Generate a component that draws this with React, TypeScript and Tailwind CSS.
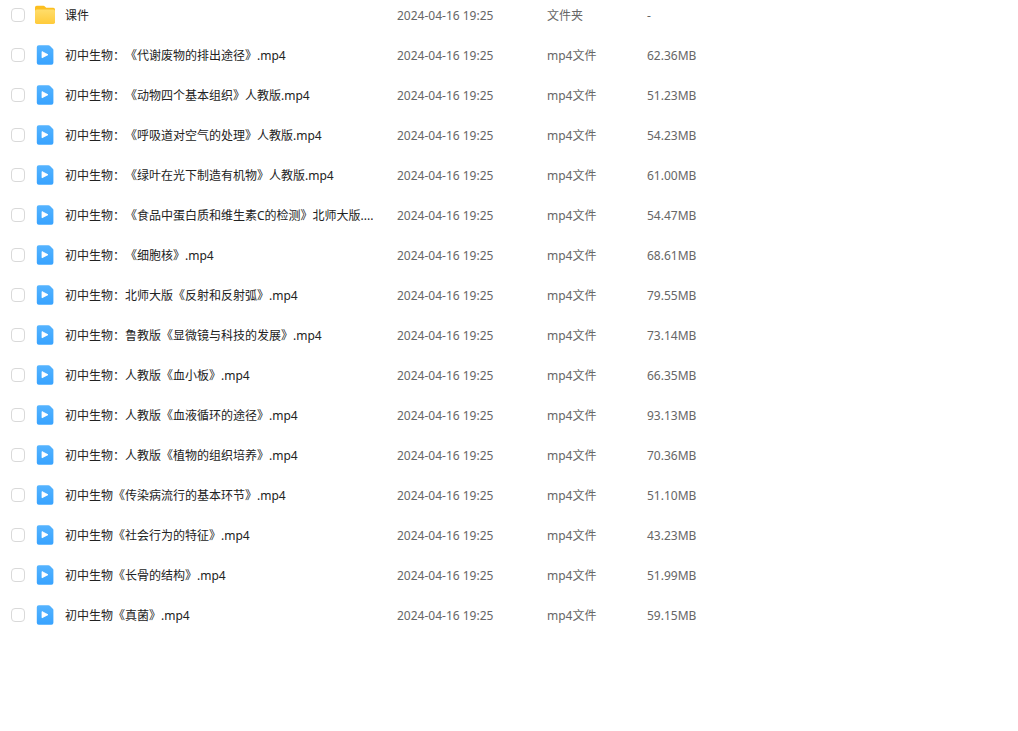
import React, { useState } from 'react';

interface FileItem {
  name: string;
  time: string;
  type: 'folder' | 'mp4';
  size: string;
}

const TIME = '2024-04-16 19:25';

const files: FileItem[] = [
  { name: '课件', time: TIME, type: 'folder', size: '-' },
  { name: '初中生物：《代谢废物的排出途径》.mp4', time: TIME, type: 'mp4', size: '62.36MB' },
  { name: '初中生物：《动物四个基本组织》人教版.mp4', time: TIME, type: 'mp4', size: '51.23MB' },
  { name: '初中生物：《呼吸道对空气的处理》人教版.mp4', time: TIME, type: 'mp4', size: '54.23MB' },
  { name: '初中生物：《绿叶在光下制造有机物》人教版.mp4', time: TIME, type: 'mp4', size: '61.00MB' },
  { name: '初中生物：《食品中蛋白质和维生素C的检测》北师大版....', time: TIME, type: 'mp4', size: '54.47MB' },
  { name: '初中生物：《细胞核》.mp4', time: TIME, type: 'mp4', size: '68.61MB' },
  { name: '初中生物：北师大版《反射和反射弧》.mp4', time: TIME, type: 'mp4', size: '79.55MB' },
  { name: '初中生物：鲁教版《显微镜与科技的发展》.mp4', time: TIME, type: 'mp4', size: '73.14MB' },
  { name: '初中生物：人教版《血小板》.mp4', time: TIME, type: 'mp4', size: '66.35MB' },
  { name: '初中生物：人教版《血液循环的途径》.mp4', time: TIME, type: 'mp4', size: '93.13MB' },
  { name: '初中生物：人教版《植物的组织培养》.mp4', time: TIME, type: 'mp4', size: '70.36MB' },
  { name: '初中生物《传染病流行的基本环节》.mp4', time: TIME, type: 'mp4', size: '51.10MB' },
  { name: '初中生物《社会行为的特征》.mp4', time: TIME, type: 'mp4', size: '43.23MB' },
  { name: '初中生物《长骨的结构》.mp4', time: TIME, type: 'mp4', size: '51.99MB' },
  { name: '初中生物《真菌》.mp4', time: TIME, type: 'mp4', size: '59.15MB' },
];

function FolderIcon() {
  return (
    <svg className="w-5 h-5 shrink-0" viewBox="0 0 20 20" aria-hidden="true">
      <defs>
        <linearGradient id="folder" x1="0" y1="0" x2="0" y2="1">
          <stop offset="0" stopColor="#ffdd6b" />
          <stop offset="1" stopColor="#ffcb3a" />
        </linearGradient>
      </defs>
      <path d="M0 2.500A1.700 1.700 0 0 1 1.700.8h6.800c.6 0 1 .2 1.400.6l1.300 1.300h7.100A1.700 1.700 0 0 1 20 4.400V12H0z" fill="#fcbf20" />
      <rect y="4.500" width="20" height="14.500" rx="1.700" fill="url(#folder)" />
    </svg>
  );
}

function VideoIcon() {
  return (
    <svg className="w-5 h-5 shrink-0" viewBox="0 0 20 20" aria-hidden="true">
      <defs>
        <linearGradient id="video" x1="0" y1="0" x2="0" y2="1">
          <stop offset="0" stopColor="#54b3ff" />
          <stop offset="1" stopColor="#38a3ff" />
        </linearGradient>
      </defs>
      <path
        d="M3.800.3h9.700c.5 0 .9.200 1.300.5l3 3c.4.400.6.800.6 1.300v12.600a2 2 0 0 1-2 2H3.800a2 2 0 0 1-2-2V2.300a2 2 0 0 1 2-2z"
        fill="url(#video)"
      />
      <path d="M7 6.600v6.200l6-3.100z" fill="#fff" stroke="#fff" strokeWidth=".8" strokeLinejoin="round" />
    </svg>
  );
}

function FileRow({ file }: { file: FileItem }) {
  const [checked, setChecked] = useState(false);

  return (
    <tr className="h-10">
      <td className="pl-[11px]">
        <input
          type="checkbox"
          aria-label={file.name}
          checked={checked}
          onChange={() => setChecked(!checked)}
          className="block w-[14px] h-[14px] appearance-none rounded-[4px] border border-[#d9d9d9] bg-white checked:bg-[#40a9ff]"
        />
      </td>
      <td className="pr-5">
        <div className="flex items-center gap-[10px]">
          {file.type === 'folder' ? <FolderIcon /> : <VideoIcon />}
          <a href="#" className="truncate pt-[2px] text-[#222]">
            {file.name}
          </a>
        </div>
      </td>
      <td className="pt-[2px] text-[#666]">{file.time}</td>
      <td className="pt-[2px] text-[#666]">{file.type === 'folder' ? '文件夹' : 'mp4文件'}</td>
      <td className="pt-[2px] text-[#666]">{file.size}</td>
    </tr>
  );
}

export default function App() {
  return (
    <main className="min-h-screen overflow-hidden bg-white">
      <table className="-mt-[5px] w-full table-fixed border-collapse text-[12px] leading-5 [text-spacing-trim:space-all] font-['Noto_Sans','Noto_Sans_CJK_SC',sans-serif]">
        <colgroup>
          <col className="w-[35px]" />
          <col className="w-[362px]" />
          <col className="w-[150px]" />
          <col className="w-[100px]" />
          <col />
        </colgroup>
        <tbody>
          {files.map((file) => (
            <FileRow key={file.name} file={file} />
          ))}
        </tbody>
      </table>
    </main>
  );
}
